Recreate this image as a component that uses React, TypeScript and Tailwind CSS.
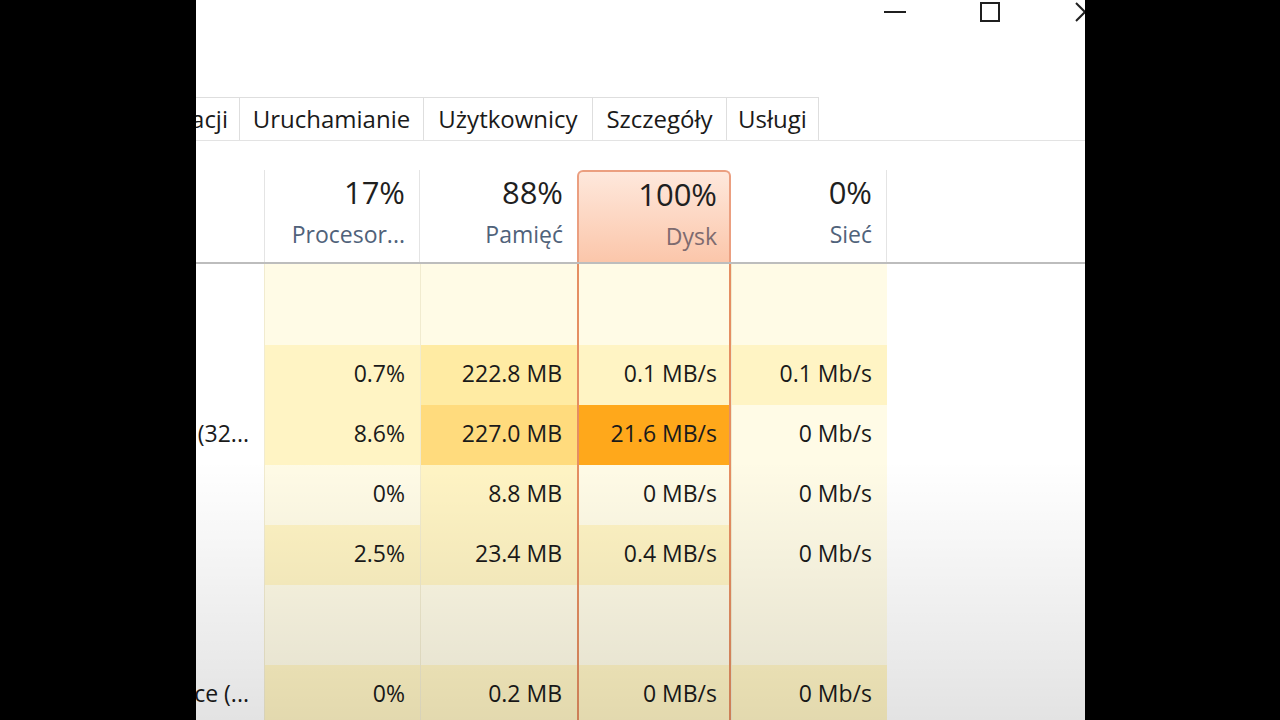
import React from 'react';

const PALE = 'bg-[#fffbe6]';
const LOW = 'bg-[#fff4c4]';
const MEM = 'bg-[#ffeba3]';
const MID = 'bg-[#ffdb7d]';
const HIGH = 'bg-[#ffa81b]';

const tabs = [
  { label: 'Uruchamianie', w: 'w-[184px]' },
  { label: 'Użytkownicy', w: 'w-[169px]' },
  { label: 'Szczegóły', w: 'w-[134px]' },
  { label: 'Usługi', w: 'w-[92px]' },
];

const columns = [
  { pct: '17%', label: 'Procesor...', w: 'w-[156px]' },
  { pct: '88%', label: 'Pamięć', w: 'w-[157px]' },
  { pct: '100%', label: 'Dysk', w: 'w-[154px]', active: true },
  { pct: '0%', label: 'Sieć', w: 'w-[156px]' },
];

type Row = { h: string; name?: string; vals?: string[]; bg: string[] };

const rows: Row[] = [
  { h: 'h-[81px]', bg: [PALE, PALE, PALE, PALE] },
  { h: 'h-[60px]', vals: ['0.7%', '222.8 MB', '0.1 MB/s', '0.1 Mb/s'], bg: [LOW, MEM, LOW, LOW] },
  { h: 'h-[60px]', name: '(32...', vals: ['8.6%', '227.0 MB', '21.6 MB/s', '0 Mb/s'], bg: [LOW, MID, HIGH, PALE] },
  { h: 'h-[60px]', vals: ['0%', '8.8 MB', '0 MB/s', '0 Mb/s'], bg: [PALE, LOW, PALE, PALE] },
  { h: 'h-[60px]', vals: ['2.5%', '23.4 MB', '0.4 MB/s', '0 Mb/s'], bg: [LOW, LOW, LOW, PALE] },
  { h: 'h-[80px]', bg: [PALE, PALE, PALE, PALE] },
  { h: 'h-[60px]', name: 'ce (...', vals: ['0%', '0.2 MB', '0 MB/s', '0 Mb/s'], bg: [LOW, LOW, LOW, LOW] },
];

export default function App() {
  return (
    <div className="flex h-[720px] w-[1280px] overflow-hidden bg-black">
      <div className="w-[196px] shrink-0 bg-black" />

      {/* task manager window, cropped */}
      <main
        className="relative flex w-[889px] shrink-0 flex-col overflow-hidden bg-white text-[#1a1a1a]"
        style={{ fontFamily: '"Segoe UI", "Open Sans", "Noto Sans", sans-serif' }}
      >
        {/* title bar */}
        <div className="flex h-[97px] shrink-0 items-start justify-end -mr-[47px]">
          <div className="flex h-[24px] w-[95px] items-center justify-center">
            <div className="h-[2px] w-[22px] bg-[#1f1f1f]" />
          </div>
          <div className="flex h-[24px] w-[95px] items-center justify-center">
            <div className="h-[20px] w-[20px] border-2 border-[#1f1f1f]" />
          </div>
          <div className="flex h-[24px] w-[95px] items-center justify-center">
            <svg width="20" height="20" viewBox="0 0 20 20" stroke="#1f1f1f" strokeWidth="2">
              <line x1="1" y1="1" x2="19" y2="19" />
              <line x1="19" y1="1" x2="1" y2="19" />
            </svg>
          </div>
        </div>

        {/* tabs */}
        <div className="flex h-[44px] shrink-0 border-b border-[#e3e3e3]">
          <div className="flex w-[44px] justify-end overflow-hidden whitespace-nowrap border-r border-t border-[#dedede] pr-[11px] text-[24px] leading-[42px]">
            Historia aplikacji
          </div>
          {tabs.map((t) => (
            <div
              key={t.label}
              className={`${t.w} border-r border-t border-[#dedede] text-center text-[24px] leading-[42px]`}
            >
              {t.label}
            </div>
          ))}
        </div>

        <div className="h-[29px] shrink-0" />

        {/* column headers */}
        <div className="flex h-[92px] shrink-0">
          <div className="w-[68px] shrink-0" />
          {columns.map((c, i) =>
            c.active ? (
              <div
                key={c.label}
                className={`${c.w} flex shrink-0 flex-col items-end rounded-t-[6px] border-2 border-b-0 border-[#eb9f80] bg-linear-to-b from-[#fee8dc] to-[#fbc6aa] pr-[12px]`}
              >
                <span className="text-[31px] leading-[44px] text-[#1f1f1f]">{c.pct}</span>
                <span className="text-[23px] leading-[40px] text-[#7e6b6f]">{c.label}</span>
              </div>
            ) : (
              <div
                key={c.label}
                className={`${c.w} flex shrink-0 flex-col items-end pr-[14px] ${i === 0 || i === 3 ? 'border-x border-[#e4e4e4]' : ''} ${i === 3 ? 'border-l-0' : ''}`}
              >
                <span className="text-[31px] leading-[44px] text-[#1f1f1f]">{c.pct}</span>
                <span className="text-[23px] leading-[40px] text-[#50627a]">{c.label}</span>
              </div>
            )
          )}
        </div>

        <div className="h-[2px] shrink-0 bg-[#bdbdbd]" />

        {/* process rows */}
        <div className="flex flex-col">
          {rows.map((r, ri) => (
            <div key={ri} className={`${r.h} flex shrink-0`}>
              <div className="flex w-[68px] shrink-0 items-center justify-end overflow-hidden whitespace-nowrap pb-[3px] pr-[15px] text-[23px]">
                {r.name}
              </div>
              {columns.map((c, ci) => (
                <div
                  key={c.label}
                  className={`${c.w} ${r.bg[ci]} flex shrink-0 items-center justify-end pb-[3px] text-[23px] ${
                    c.active ? 'border-x-2 border-[#e58e62] pr-[12px]' : 'border-l border-[#f1ebcf] pr-[15px]'
                  }`}
                >
                  {r.vals?.[ci]}
                </div>
              ))}
            </div>
          ))}
        </div>

        {/* video vignette towards the bottom */}
        <div className="pointer-events-none absolute inset-x-0 bottom-0 h-[260px] bg-linear-to-b from-transparent to-black/[0.11]" />
      </main>

      <div className="flex-1 bg-black" />
    </div>
  );
}
